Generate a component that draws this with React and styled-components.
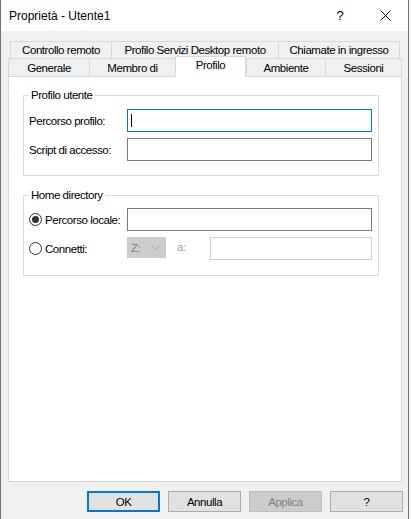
import React from 'react';
import styled, { createGlobalStyle } from 'styled-components';

const GlobalStyle = createGlobalStyle`
  html, body { margin: 0; padding: 0; background: #ffffff; }
  body {
    width: 411px;
    height: 519px;
    overflow: hidden;
    font-family: "Liberation Sans", Arial, sans-serif;
  }
  * { box-sizing: border-box; }
`;

const Window = styled.div`
  width: 409px;
  height: 519px;
  border-left: 1px solid #6f6f6f;
  border-right: 1px solid #6f6f6f;
  background: #f0f0f0;
  display: flex;
  flex-direction: column;
`;

const TitleBar = styled.div`
  height: 31px;
  flex: none;
  background: #ffffff;
  display: flex;
  align-items: center;
`;

const Title = styled.div`
  flex: 1;
  padding-left: 8px;
  font-size: 12px;
  color: #000000;
`;

const CaptionButton = styled.div`
  width: ${(p) => p.$w}px;
  height: 31px;
  display: flex;
  align-items: center;
  justify-content: center;
  font-size: 13px;
  color: #000000;
`;

const Body = styled.div`
  flex: 1;
  display: flex;
  flex-direction: column;
  padding: 10px 6px 0 7px;
  font-size: 11.5px;
  letter-spacing: -0.45px;
  color: #000000;
`;

const TabRow = styled.div`
  display: flex;
  align-items: flex-end;
  height: ${(p) => p.$h}px;
  margin: 0 ${(p) => p.$inset}px;
`;

const Tab = styled.div`
  position: relative;
  width: ${(p) => p.$w}px;
  height: ${(p) => (p.$active ? 21 : p.$h)}px;
  margin-bottom: ${(p) => (p.$active ? -1 : 0)}px;
  border-top: 1px solid #d9d9d9;
  border-left: 1px solid #d9d9d9;
  border-right: ${(p) => (p.$last || p.$active ? '1px solid #d9d9d9' : '0')};
  background: ${(p) => (p.$active ? '#ffffff' : '#f0f0f0')};
  z-index: ${(p) => (p.$active ? 2 : 0)};
  display: flex;
  align-items: ${(p) => (p.$active ? 'flex-start' : 'center')};
  padding-top: ${(p) => (p.$active ? 2 : 0)}px;
  justify-content: center;
  white-space: nowrap;
`;

const Panel = styled.div`
  height: 406px;
  flex: none;
  background: #ffffff;
  border: 1px solid #d9d9d9;
  padding: 12px 22px 0 14px;
  display: flex;
  flex-direction: column;
  gap: 13px;
`;

const Group = styled.fieldset`
  margin: 0;
  border: 1px solid #dcdcdc;
  padding: ${(p) => p.$pt}px 6px ${(p) => p.$pb}px 5px;
  min-width: 0;
`;

const Legend = styled.legend`
  padding: 0 2px;
  margin: 0;
  line-height: 13px;
`;

const FormGrid = styled.div`
  display: grid;
  grid-template-columns: 98px 1fr;
  row-gap: 6px;
  align-items: center;
`;

const Label = styled.div`
  white-space: nowrap;
`;

const RadioLabel = styled.div`
  display: flex;
  align-items: center;
  gap: 3px;
  white-space: nowrap;
`;

const Radio = styled.span`
  width: 13px;
  height: 13px;
  border-radius: 50%;
  border: 1px solid #333333;
  display: flex;
  align-items: center;
  justify-content: center;
  flex: none;
  &::after {
    content: '';
    width: 7px;
    height: 7px;
    border-radius: 50%;
    background: ${(p) => (p.$checked ? '#333333' : 'transparent')};
  }
`;

const TextBox = styled.div`
  height: 23px;
  width: ${(p) => (p.$w ? `${p.$w}px` : 'auto')};
  background: #ffffff;
  border: 1px solid ${(p) => (p.$focused ? '#0078d7' : p.$disabled ? '#cccccc' : '#7a7a7a')};
  display: flex;
  align-items: center;
  padding-left: 3px;
`;

const Caret = styled.span`
  width: 1px;
  height: 13px;
  background: #000000;
`;

const ControlLine = styled.div`
  display: flex;
  align-items: flex-start;
`;

const Combo = styled.div`
  width: 39px;
  height: 21px;
  background: #cccccc;
  border: 1px solid #cccccc;
  color: #838383;
  display: flex;
  align-items: center;
  justify-content: space-between;
  padding: 0 5px 0 3px;
`;

const SmallLabel = styled.div`
  color: #a0a0a0;
  margin-left: 11px;
  line-height: 21px;
`;

const Spacer = styled.div`
  flex: 1;
`;

const ButtonRow = styled.div`
  display: flex;
  justify-content: flex-end;
  gap: 8px;
  padding-top: 9px;
  margin-right: -1px;
`;

const Button = styled.div`
  width: 73px;
  height: 21px;
  display: flex;
  align-items: center;
  justify-content: center;
  background: ${(p) => (p.$disabled ? '#cccccc' : '#e1e1e1')};
  border: ${(p) => (p.$default ? '2px solid #0078d7' : `1px solid ${p.$disabled ? '#bfbfbf' : '#adadad'}`)};
  color: ${(p) => (p.$disabled ? '#838383' : '#000000')};
`;

const topTabs = [
  { label: 'Controllo remoto', w: 101 },
  { label: 'Profilo Servizi Desktop remoto', w: 167 },
  { label: 'Chiamate in ingresso', w: 122 },
];

const bottomTabs = [
  { label: 'Generale', w: 81 },
  { label: 'Membro di', w: 86 },
  { label: 'Profilo', w: 71, active: true },
  { label: 'Ambiente', w: 79 },
  { label: 'Sessioni', w: 77 },
];

export default function App() {
  return (
    <>
      <GlobalStyle />
      <Window>
        <TitleBar>
          <Title>Proprietà - Utente1</Title>
          <CaptionButton $w={44}>?</CaptionButton>
          <CaptionButton $w={46}>
            <svg width="11" height="11" viewBox="0 0 11 11">
              <path d="M0.5 0.5 L10.5 10.5 M10.5 0.5 L0.5 10.5" stroke="#000" strokeWidth="1" fill="none" />
            </svg>
          </CaptionButton>
        </TitleBar>
        <Body>
          <TabRow $h={17} $inset={2}>
            {topTabs.map((t, i) => (
              <Tab key={t.label} $w={t.w} $h={17} $last={i === topTabs.length - 1}>
                {t.label}
              </Tab>
            ))}
          </TabRow>
          <TabRow $h={18} $inset={0}>
            {bottomTabs.map((t, i) => (
              <Tab key={t.label} $w={t.w} $h={18} $active={t.active} $last={i === bottomTabs.length - 1}>
                {t.label}
              </Tab>
            ))}
          </TabRow>
          <Panel>
            <Group $pt={7} $pb={14}>
              <Legend>Profilo utente</Legend>
              <FormGrid>
                <Label>Percorso profilo:</Label>
                <TextBox $focused>
                  <Caret />
                </TextBox>
                <Label>Script di accesso:</Label>
                <TextBox />
              </FormGrid>
            </Group>
            <Group $pt={6} $pb={15}>
              <Legend>Home directory</Legend>
              <FormGrid>
                <RadioLabel>
                  <Radio $checked />
                  Percorso locale:
                </RadioLabel>
                <TextBox />
                <RadioLabel>
                  <Radio />
                  Connetti:
                </RadioLabel>
                <ControlLine>
                  <Combo>
                    <span>Z:</span>
                    <svg width="9" height="5" viewBox="0 0 9 5">
                      <path d="M0.5 0.5 L4.5 4.5 L8.5 0.5" stroke="#a8a8a8" strokeWidth="1" fill="none" />
                    </svg>
                  </Combo>
                  <SmallLabel>a:</SmallLabel>
                  <Spacer />
                  <TextBox $w={162} $disabled />
                </ControlLine>
              </FormGrid>
            </Group>
          </Panel>
          <ButtonRow>
            <Button $default>OK</Button>
            <Button>Annulla</Button>
            <Button $disabled>Applica</Button>
            <Button>?</Button>
          </ButtonRow>
        </Body>
      </Window>
    </>
  );
}
